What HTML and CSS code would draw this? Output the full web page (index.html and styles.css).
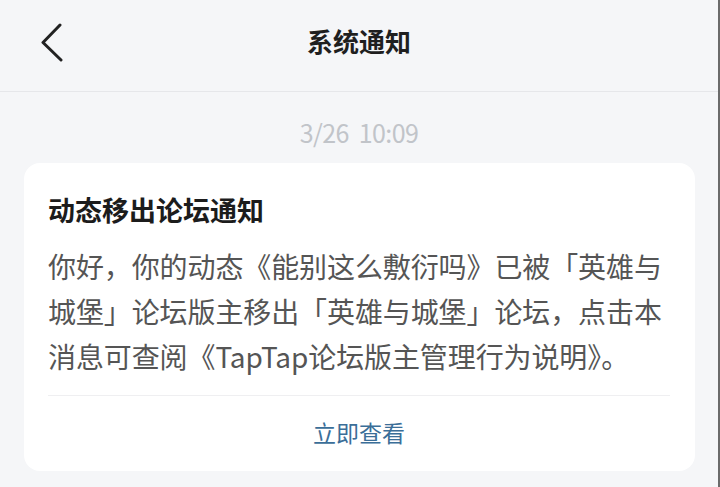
FILE: index.html
```html
<!DOCTYPE html>
<html lang="zh-CN">
<head>
<meta charset="utf-8">
<title>系统通知</title>
<link rel="stylesheet" href="styles.css">
</head>
<body>
<div class="page">
  <header class="topbar">
    <div class="back">
      <svg width="24" height="40" viewBox="0 0 24 40" aria-hidden="true">
        <path d="M20 3 L3 20.5 L21 38" fill="none" stroke="#222" stroke-width="3" stroke-linecap="round" stroke-linejoin="round"/>
      </svg>
    </div>
    <h1 class="title">系统通知</h1>
    <div class="spacer"></div>
  </header>
  <main class="content">
    <div class="time">3/26&nbsp;&nbsp;10:09</div>
    <section class="card">
      <h2 class="card-title">动态移出论坛通知</h2>
      <p class="card-body">你好，你的动态《能别这么敷衍吗》已被「英雄与城堡」论坛版主移出「英雄与城堡」论坛，点击本消息可查阅《TapTap论坛版主管理行为说明》。</p>
      <div class="divider"></div>
      <div class="action">立即查看</div>
    </section>
  </main>
</div>
</body>
</html>
```
FILE: styles.css
```css
* { box-sizing: border-box; }
html, body {
  margin: 0;
  padding: 0;
  background: #f5f6f8;
}
body {
  font-family: "Noto Sans CJK SC", "Noto Sans", sans-serif;
  width: 720px;
  height: 487px;
  overflow: hidden;
}
.page {
  width: 720px;
  height: 487px;
  border-right: 2px solid #6b6b6b;
}
.topbar {
  height: 92px;
  border-bottom: 1px solid #e6e7ea;
  display: grid;
  grid-template-columns: 100px 1fr 100px;
  align-items: center;
  padding-bottom: 8px;
}
.back {
  padding-left: 40px;
  display: flex;
  align-items: center;
}
.back svg { display: block; }
.title {
  margin: 0;
  text-align: center;
  font-size: 26px;
  font-weight: 700;
  color: #1f1f1f;
  line-height: 36px;
  padding-bottom: 2px;
}
.content {
  padding: 0 24px 0 24px;
}
.time {
  margin-top: 24px;
  text-align: center;
  font-size: 25px;
  line-height: 32px;
  color: #c1c4c9;
  letter-spacing: -0.6px;
}
.card {
  margin-top: 15px;
  background: #ffffff;
  border-radius: 16px;
  width: 671px;
  padding: 27px 25px 0 24px;
}
.card-title {
  margin: 0;
  font-size: 27px;
  line-height: 40px;
  font-weight: 700;
  color: #1c1c1c;
}
.card-body {
  margin: 14px 0 0 0;
  font-size: 28px;
  line-height: 45px;
  color: #555555;
  letter-spacing: -0.1px;
}
.divider {
  margin-top: 16px;
  height: 1px;
  background: #efeff1;
}
.action {
  text-align: center;
  font-size: 23px;
  line-height: 32px;
  color: #3b6e98;
  padding: 20px 0 23px 0;
}
```
